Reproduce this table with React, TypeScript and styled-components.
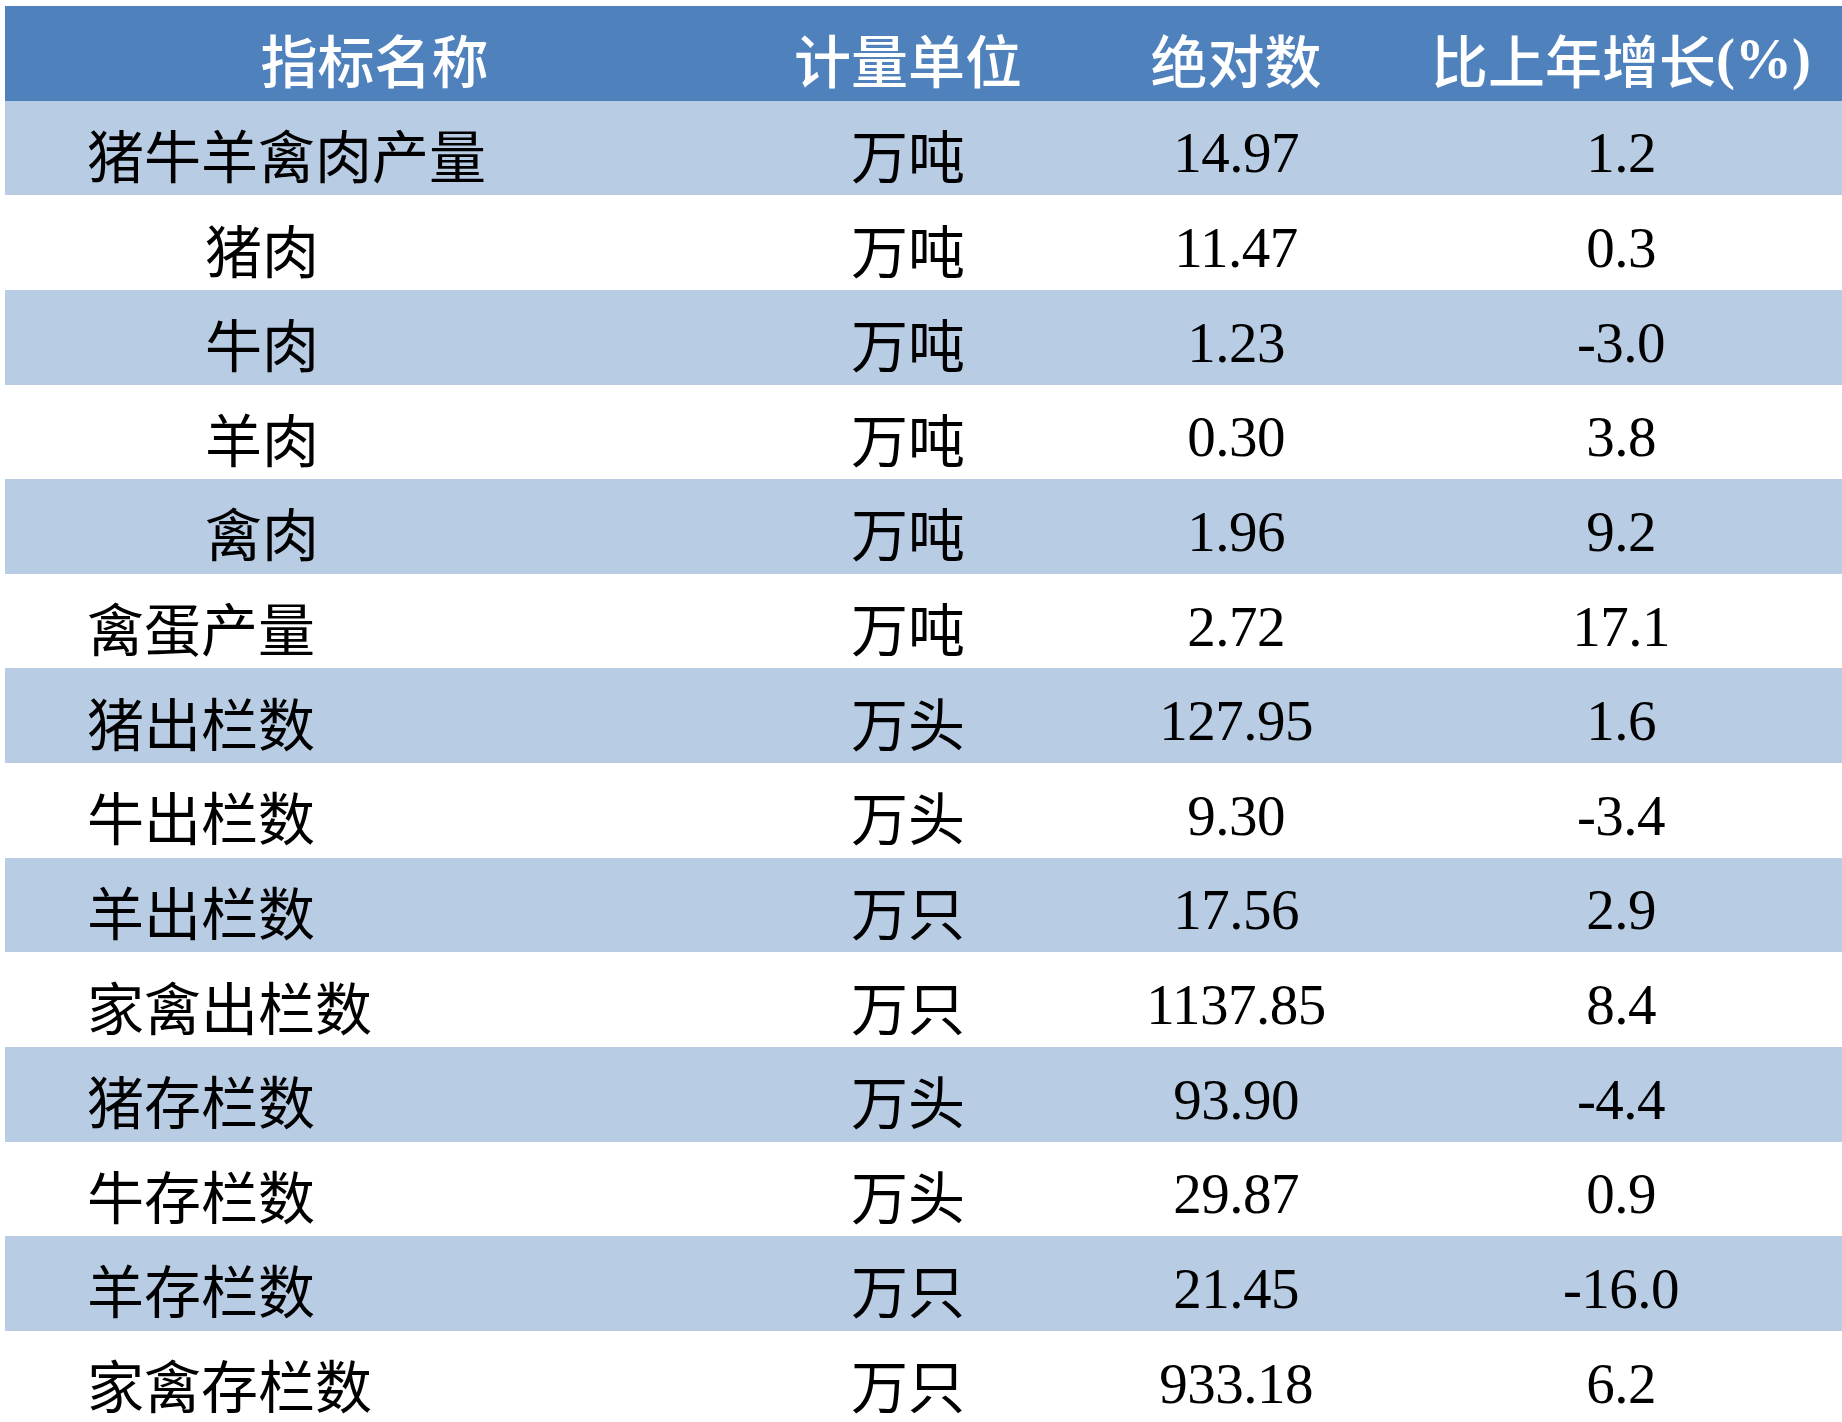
import * as React from 'react';
import styled, { createGlobalStyle } from 'styled-components';

const GlobalStyle = createGlobalStyle`
    html, body {
        margin: 0;
        padding: 0;
        background: #ffffff;
    }
    body {
        font-family: "Liberation Serif", "Noto Sans CJK SC", serif;
        overflow: hidden;
    }
`;

const COLUMNS = '739px 328px 328px 442px';
const ROW_HEIGHT = 94.64;

const Table = styled.div`
    margin: 6px 0 0 5px;
    display: flex;
    flex-direction: column;
`;

const HeaderRow = styled.div`
    display: grid;
    grid-template-columns: ${COLUMNS};
    height: ${ROW_HEIGHT}px;
    background: #4f81bd;
    color: #ffffff;
    font-weight: 500;
`;

const Row = styled.div<{ $striped: boolean }>`
    display: grid;
    grid-template-columns: ${COLUMNS};
    height: ${ROW_HEIGHT}px;
    background: ${(p) => (p.$striped ? '#b8cce4' : '#ffffff')};
    color: #000000;
`;

const Cell = styled.div`
    display: flex;
    align-items: center;
    justify-content: center;
    font-size: 57px;
    padding-top: 10px;
    white-space: nowrap;
`;

// Percent sign in the header is set in bold Times like the source sheet.
const Symbol = styled.span`
    font-weight: bold;
`;

const NameCell = styled(Cell)<{ $indent: boolean }>`
    justify-content: flex-start;
    padding-left: ${(p) => (p.$indent ? 200 : 82)}px;
`;

const NumberCell = styled(Cell)`
    font-size: 57px;
    letter-spacing: -0.5px;
`;

interface Item {
    name: string;
    unit: string;
    value: string;
    growth: string;
    indent?: boolean;
}

const items: Item[] = [
    { name: '猪牛羊禽肉产量', unit: '万吨', value: '14.97', growth: '1.2' },
    { name: '猪肉', unit: '万吨', value: '11.47', growth: '0.3', indent: true },
    { name: '牛肉', unit: '万吨', value: '1.23', growth: '-3.0', indent: true },
    { name: '羊肉', unit: '万吨', value: '0.30', growth: '3.8', indent: true },
    { name: '禽肉', unit: '万吨', value: '1.96', growth: '9.2', indent: true },
    { name: '禽蛋产量', unit: '万吨', value: '2.72', growth: '17.1' },
    { name: '猪出栏数', unit: '万头', value: '127.95', growth: '1.6' },
    { name: '牛出栏数', unit: '万头', value: '9.30', growth: '-3.4' },
    { name: '羊出栏数', unit: '万只', value: '17.56', growth: '2.9' },
    { name: '家禽出栏数', unit: '万只', value: '1137.85', growth: '8.4' },
    { name: '猪存栏数', unit: '万头', value: '93.90', growth: '-4.4' },
    { name: '牛存栏数', unit: '万头', value: '29.87', growth: '0.9' },
    { name: '羊存栏数', unit: '万只', value: '21.45', growth: '-16.0' },
    { name: '家禽存栏数', unit: '万只', value: '933.18', growth: '6.2' },
];

export default function App() {
    return (
        <>
            <GlobalStyle />
            <Table>
                <HeaderRow>
                    <Cell>指标名称</Cell>
                    <Cell>计量单位</Cell>
                    <Cell>绝对数</Cell>
                    <Cell>
                        比上年增长<Symbol>(%)</Symbol>
                    </Cell>
                </HeaderRow>
                {items.map((item, i) => (
                    <Row key={item.name} $striped={i % 2 === 0}>
                        <NameCell $indent={!!item.indent}>{item.name}</NameCell>
                        <Cell>{item.unit}</Cell>
                        <NumberCell>{item.value}</NumberCell>
                        <NumberCell>{item.growth}</NumberCell>
                    </Row>
                ))}
            </Table>
        </>
    );
}
